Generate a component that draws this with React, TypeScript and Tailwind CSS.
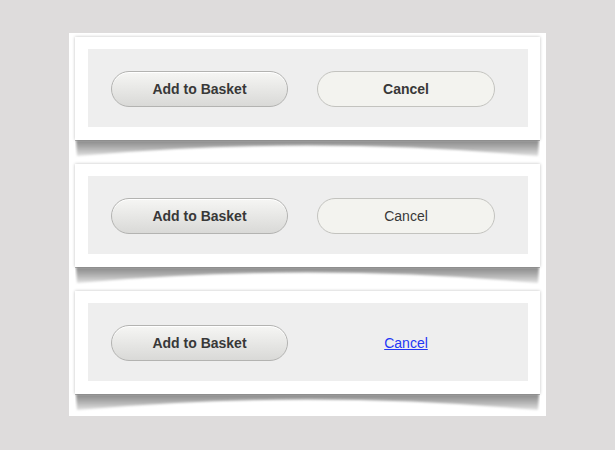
import React from "react";

function Shadow() {
  return (
    <svg width="465" height="18" viewBox="0 0 465 18" className="block" aria-hidden="true">
      <defs>
        <linearGradient id="sg" x1="0" y1="0" x2="0" y2="1">
          <stop offset="0" stopColor="#888888" />
          <stop offset="0.5" stopColor="#b0b0b0" />
          <stop offset="1" stopColor="#e2e2e2" />
        </linearGradient>
        <filter id="sb" x="-5%" y="-50%" width="110%" height="200%">
          <feGaussianBlur stdDeviation="1.3" />
        </filter>
      </defs>
      <path d="M1,0 L464,0 L463,16 Q232.5,-5 2,16 Z" fill="url(#sg)" filter="url(#sb)" />
      <rect x="0" y="0" width="465" height="1" fill="#6a6a6a" opacity="0.45" />
    </svg>
  );
}

function AddButton() {
  return (
    <button className="w-[177px] h-[36px] rounded-full border border-[#b3b3b1] bg-gradient-to-b from-[#f6f6f4] to-[#d9d9d7] text-[14px] font-bold text-[#383838] shadow-[inset_0_1px_0_#ffffff]">
      Add to Basket
    </button>
  );
}

function Card({ children, last }: { children: React.ReactNode; last?: boolean }) {
  return (
    <div className={last ? "mb-[4px]" : "mb-[6px]"}>
      <div className="h-[103px] bg-white shadow-[0_0_3px_rgba(0,0,0,0.25)] pt-[12px] pl-[13px] pr-[12px]">
        <div className="h-[78px] bg-[#eeeeee] flex items-center pl-[23px] pt-[2px]">
          <AddButton />
          <div className="ml-[29px] w-[178px] flex justify-center">{children}</div>
        </div>
      </div>
      <Shadow />
    </div>
  );
}

export default function App() {
  return (
    <div className="w-[615px] h-[450px] bg-[#dedcdc] pt-[33px] pl-[69px]" style={{ fontFamily: '"Liberation Sans", Arial, sans-serif' }}>
      <div className="w-[477px] h-[383px] bg-white pt-[4px] pl-[6px] pr-[6px]">
        <Card>
          <button className="w-[178px] h-[36px] rounded-full border border-[#c3c3bf] bg-[#f3f3ef] text-[14px] font-bold text-[#383838]">
            Cancel
          </button>
        </Card>
        <Card>
          <button className="w-[178px] h-[36px] rounded-full border border-[#c3c3bf] bg-[#f3f3ef] text-[14px] text-[#383838]">
            Cancel
          </button>
        </Card>
        <Card last>
          <a href="#" className="text-[14px] text-[#2336f5] underline">
            Cancel
          </a>
        </Card>
      </div>
    </div>
  );
}
